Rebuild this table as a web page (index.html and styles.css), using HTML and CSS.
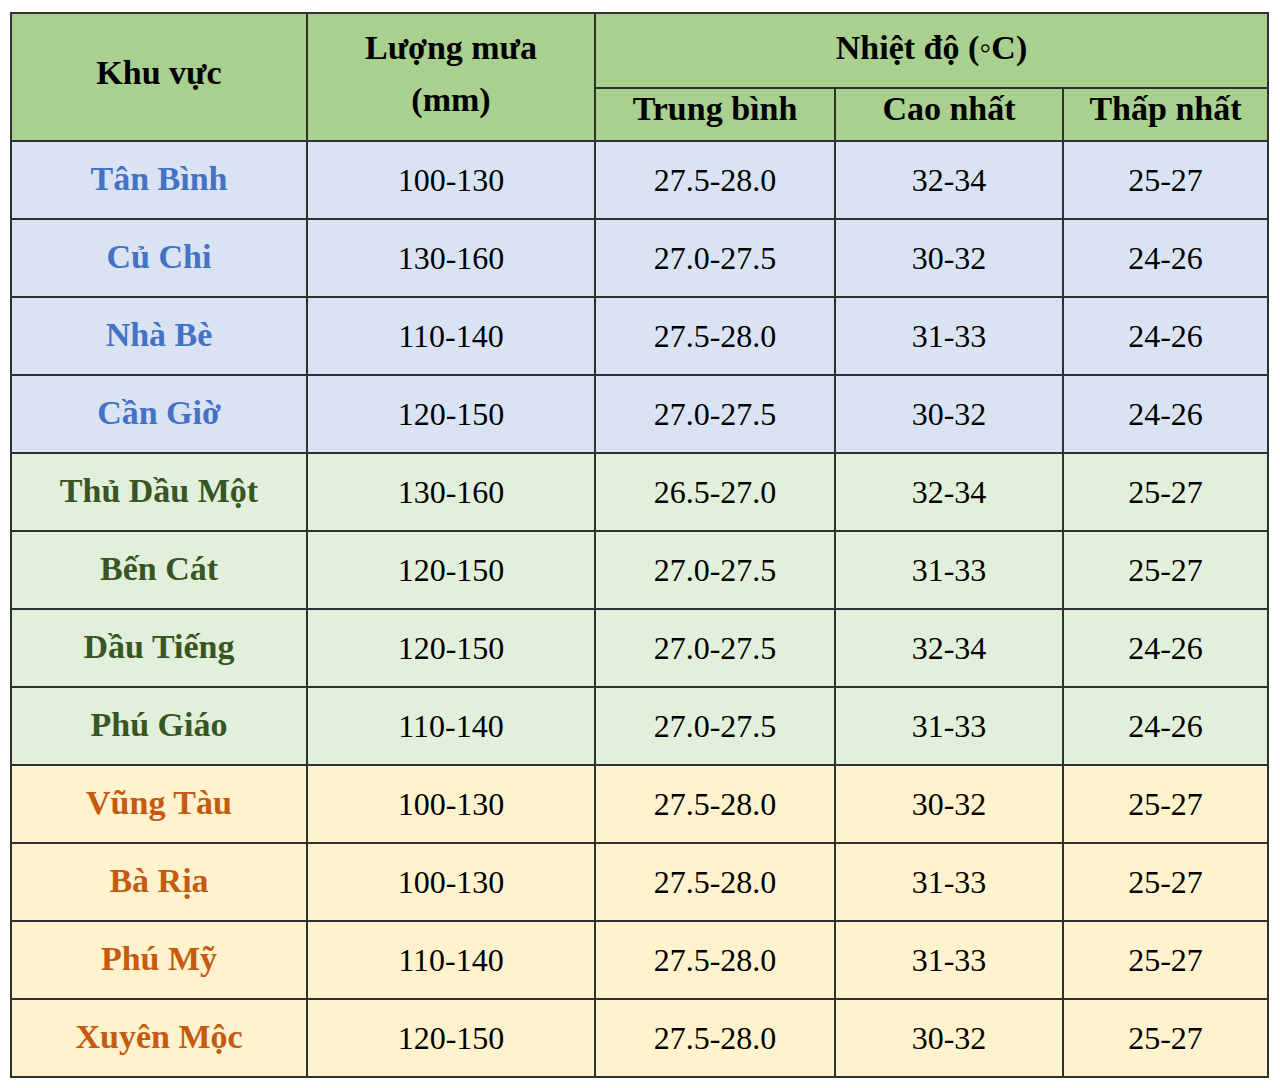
FILE: index.html
```html
<!DOCTYPE html>
<html lang="vi">
<head>
<meta charset="utf-8">
<title>Lượng mưa và nhiệt độ</title>
<link rel="stylesheet" href="styles.css">
</head>
<body>
<table class="climate">
  <colgroup>
    <col class="c1"><col class="c2"><col class="c3"><col class="c4"><col class="c5">
  </colgroup>
  <thead>
    <tr class="h1">
      <th rowspan="2" class="area">Khu vực</th>
      <th rowspan="2" class="rain">Lượng mưa<br>(mm)</th>
      <th colspan="3" class="temp">Nhiệt độ (◦C)</th>
    </tr>
    <tr class="h2">
      <th>Trung bình</th>
      <th>Cao nhất</th>
      <th>Thấp nhất</th>
    </tr>
  </thead>
  <tbody>
    <tr class="blue"><th>Tân Bình</th><td>100-130</td><td>27.5-28.0</td><td>32-34</td><td>25-27</td></tr>
    <tr class="blue"><th>Củ Chi</th><td>130-160</td><td>27.0-27.5</td><td>30-32</td><td>24-26</td></tr>
    <tr class="blue"><th>Nhà Bè</th><td>110-140</td><td>27.5-28.0</td><td>31-33</td><td>24-26</td></tr>
    <tr class="blue"><th>Cần Giờ</th><td>120-150</td><td>27.0-27.5</td><td>30-32</td><td>24-26</td></tr>
    <tr class="green"><th>Thủ Dầu Một</th><td>130-160</td><td>26.5-27.0</td><td>32-34</td><td>25-27</td></tr>
    <tr class="green"><th>Bến Cát</th><td>120-150</td><td>27.0-27.5</td><td>31-33</td><td>25-27</td></tr>
    <tr class="green"><th>Dầu Tiếng</th><td>120-150</td><td>27.0-27.5</td><td>32-34</td><td>24-26</td></tr>
    <tr class="green"><th>Phú Giáo</th><td>110-140</td><td>27.0-27.5</td><td>31-33</td><td>24-26</td></tr>
    <tr class="orange"><th>Vũng Tàu</th><td>100-130</td><td>27.5-28.0</td><td>30-32</td><td>25-27</td></tr>
    <tr class="orange"><th>Bà Rịa</th><td>100-130</td><td>27.5-28.0</td><td>31-33</td><td>25-27</td></tr>
    <tr class="orange"><th>Phú Mỹ</th><td>110-140</td><td>27.5-28.0</td><td>31-33</td><td>25-27</td></tr>
    <tr class="orange"><th>Xuyên Mộc</th><td>120-150</td><td>27.5-28.0</td><td>30-32</td><td>25-27</td></tr>
  </tbody>
</table>
</body>
</html>
```

FILE: styles.css
```css
html, body {
  margin: 0;
  padding: 0;
  background: #ffffff;
}

body {
  padding: 12px 0 0 10px;
  font-family: "Liberation Serif", "Times New Roman", serif;
}

.climate {
  border-collapse: collapse;
  table-layout: fixed;
  width: 1257px;
}

.c1 { width: 296px; }
.c2 { width: 288px; }
.c3 { width: 240px; }
.c4 { width: 228px; }
.c5 { width: 205px; }

.climate th,
.climate td {
  border: 2px solid #303030;
  text-align: center;
  vertical-align: middle;
  padding: 0;
}

.climate thead th {
  background: #a9d08e;
  color: #000000;
  font-weight: bold;
  font-size: 34px;
  line-height: 52px;
}

.climate .h1 { height: 75px; }
.climate .h2 { height: 53px; }

.climate thead .area {
  padding-bottom: 9px;
}

.climate thead .rain {
  padding-bottom: 6px;
}

.climate thead .temp {
  line-height: 40px;
  padding-bottom: 6px;
}

.climate thead .h2 th {
  line-height: 40px;
  padding-bottom: 11px;
}

.climate tbody tr {
  height: 78px;
}

.climate tbody th {
  font-weight: bold;
  font-size: 34px;
  line-height: 40px;
  padding-bottom: 2px;
}

.climate tbody td {
  font-size: 32px;
  line-height: 40px;
  color: #000000;
}

.blue th, .blue td { background: #dae3f3; }
.blue th { color: #4472c4; }

.green th, .green td { background: #e2efda; }
.green th { color: #375623; }

.orange th, .orange td { background: #fff2cc; }
.orange th { color: #c55a11; }
```
